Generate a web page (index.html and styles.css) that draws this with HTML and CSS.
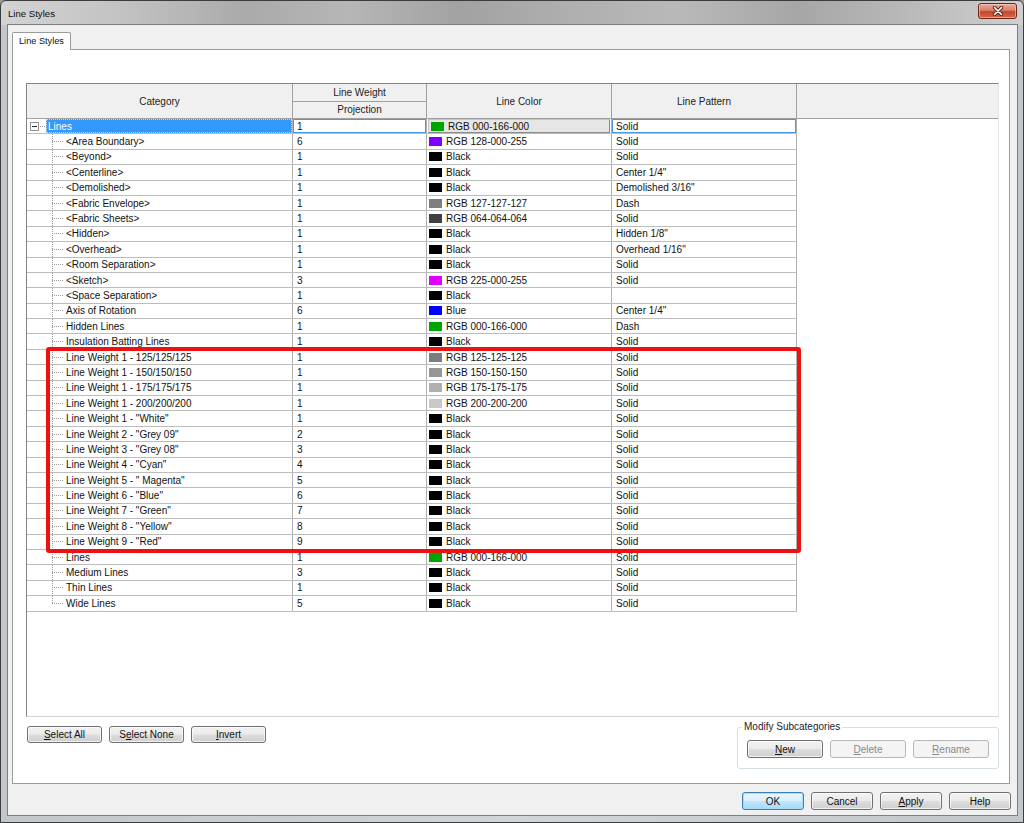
FILE: index.html
```html
<!DOCTYPE html>
<html>
<head>
<meta charset="utf-8">
<title>Line Styles</title>
<link rel="stylesheet" href="styles.css">
</head>
<body>
<div class="window">
  <div class="titlebar">
    <span class="title">Line Styles</span>
    <div class="close">
      <svg width="14" height="10" viewBox="0 0 14 10"><path d="M3.5 1.5l7 7M10.5 1.5l-7 7" stroke="#5a1a10" stroke-width="3.4" stroke-linecap="round"/><path d="M3.5 1.5l7 7M10.5 1.5l-7 7" stroke="#ffffff" stroke-width="1.7" stroke-linecap="round"/></svg>
    </div>
  </div>
  <div class="client">
    <div class="tabs"><div class="tab">Line Styles</div></div>
    <div class="panel">
      <div class="grid">
        <div class="head">
          <div class="hc">Category</div>
          <div class="hc lw"><div class="lw1">Line Weight</div><div class="lw2">Projection</div></div>
          <div class="hc">Line Color</div>
          <div class="hc">Line Pattern</div>
          <div class="hc last"></div>
        </div>
        <div class="body">
          <div class="row root">
            <div class="c cat rootcat">
              <svg class="exp" width="9" height="9" viewBox="0 0 9 9"><rect x="0.5" y="0.5" width="8" height="8" fill="#fbfbfb" stroke="#919191"/><path d="M2 4.5h5" stroke="#2b2b2b"/></svg>
              <span class="sel">Lines</span>
            </div>
            <div class="c w focus">1</div>
            <div class="c col"><div class="colorbox"><i class="sw green"></i>RGB 000-166-000</div></div>
            <div class="c pat focus">Solid</div>
          </div>
          <div class="row"><div class="c cat">&lt;Area Boundary&gt;</div><div class="c w">6</div><div class="c col"><i class="sw purple"></i>RGB 128-000-255</div><div class="c pat">Solid</div></div>
          <div class="row"><div class="c cat">&lt;Beyond&gt;</div><div class="c w">1</div><div class="c col"><i class="sw black"></i>Black</div><div class="c pat">Solid</div></div>
          <div class="row"><div class="c cat">&lt;Centerline&gt;</div><div class="c w">1</div><div class="c col"><i class="sw black"></i>Black</div><div class="c pat">Center 1/4"</div></div>
          <div class="row"><div class="c cat">&lt;Demolished&gt;</div><div class="c w">1</div><div class="c col"><i class="sw black"></i>Black</div><div class="c pat">Demolished 3/16"</div></div>
          <div class="row"><div class="c cat">&lt;Fabric Envelope&gt;</div><div class="c w">1</div><div class="c col"><i class="sw g127"></i>RGB 127-127-127</div><div class="c pat">Dash</div></div>
          <div class="row"><div class="c cat">&lt;Fabric Sheets&gt;</div><div class="c w">1</div><div class="c col"><i class="sw g064"></i>RGB 064-064-064</div><div class="c pat">Solid</div></div>
          <div class="row"><div class="c cat">&lt;Hidden&gt;</div><div class="c w">1</div><div class="c col"><i class="sw black"></i>Black</div><div class="c pat">Hidden 1/8"</div></div>
          <div class="row"><div class="c cat">&lt;Overhead&gt;</div><div class="c w">1</div><div class="c col"><i class="sw black"></i>Black</div><div class="c pat">Overhead 1/16"</div></div>
          <div class="row"><div class="c cat">&lt;Room Separation&gt;</div><div class="c w">1</div><div class="c col"><i class="sw black"></i>Black</div><div class="c pat">Solid</div></div>
          <div class="row"><div class="c cat">&lt;Sketch&gt;</div><div class="c w">3</div><div class="c col"><i class="sw magenta"></i>RGB 225-000-255</div><div class="c pat">Solid</div></div>
          <div class="row"><div class="c cat">&lt;Space Separation&gt;</div><div class="c w">1</div><div class="c col"><i class="sw black"></i>Black</div><div class="c pat"></div></div>
          <div class="row"><div class="c cat">Axis of Rotation</div><div class="c w">6</div><div class="c col"><i class="sw blue"></i>Blue</div><div class="c pat">Center 1/4"</div></div>
          <div class="row"><div class="c cat">Hidden Lines</div><div class="c w">1</div><div class="c col"><i class="sw green"></i>RGB 000-166-000</div><div class="c pat">Dash</div></div>
          <div class="row"><div class="c cat">Insulation Batting Lines</div><div class="c w">1</div><div class="c col"><i class="sw black"></i>Black</div><div class="c pat">Solid</div></div>
          <div class="row"><div class="c cat">Line Weight 1 - 125/125/125</div><div class="c w">1</div><div class="c col"><i class="sw g125"></i>RGB 125-125-125</div><div class="c pat">Solid</div></div>
          <div class="row"><div class="c cat">Line Weight 1 - 150/150/150</div><div class="c w">1</div><div class="c col"><i class="sw g150"></i>RGB 150-150-150</div><div class="c pat">Solid</div></div>
          <div class="row"><div class="c cat">Line Weight 1 - 175/175/175</div><div class="c w">1</div><div class="c col"><i class="sw g175"></i>RGB 175-175-175</div><div class="c pat">Solid</div></div>
          <div class="row"><div class="c cat">Line Weight 1 - 200/200/200</div><div class="c w">1</div><div class="c col"><i class="sw g200"></i>RGB 200-200-200</div><div class="c pat">Solid</div></div>
          <div class="row"><div class="c cat">Line Weight 1 - "White"</div><div class="c w">1</div><div class="c col"><i class="sw black"></i>Black</div><div class="c pat">Solid</div></div>
          <div class="row"><div class="c cat">Line Weight 2 - "Grey 09"</div><div class="c w">2</div><div class="c col"><i class="sw black"></i>Black</div><div class="c pat">Solid</div></div>
          <div class="row"><div class="c cat">Line Weight 3 - "Grey 08"</div><div class="c w">3</div><div class="c col"><i class="sw black"></i>Black</div><div class="c pat">Solid</div></div>
          <div class="row"><div class="c cat">Line Weight 4 - "Cyan"</div><div class="c w">4</div><div class="c col"><i class="sw black"></i>Black</div><div class="c pat">Solid</div></div>
          <div class="row"><div class="c cat">Line Weight 5 - " Magenta"</div><div class="c w">5</div><div class="c col"><i class="sw black"></i>Black</div><div class="c pat">Solid</div></div>
          <div class="row"><div class="c cat">Line Weight 6 - "Blue"</div><div class="c w">6</div><div class="c col"><i class="sw black"></i>Black</div><div class="c pat">Solid</div></div>
          <div class="row"><div class="c cat">Line Weight 7 - "Green"</div><div class="c w">7</div><div class="c col"><i class="sw black"></i>Black</div><div class="c pat">Solid</div></div>
          <div class="row"><div class="c cat">Line Weight 8 - "Yellow"</div><div class="c w">8</div><div class="c col"><i class="sw black"></i>Black</div><div class="c pat">Solid</div></div>
          <div class="row"><div class="c cat">Line Weight 9 - "Red"</div><div class="c w">9</div><div class="c col"><i class="sw black"></i>Black</div><div class="c pat">Solid</div></div>
          <div class="row"><div class="c cat">Lines</div><div class="c w">1</div><div class="c col"><i class="sw green"></i>RGB 000-166-000</div><div class="c pat">Solid</div></div>
          <div class="row"><div class="c cat">Medium Lines</div><div class="c w">3</div><div class="c col"><i class="sw black"></i>Black</div><div class="c pat">Solid</div></div>
          <div class="row"><div class="c cat">Thin Lines</div><div class="c w">1</div><div class="c col"><i class="sw black"></i>Black</div><div class="c pat">Solid</div></div>
          <div class="row"><div class="c cat lastchild">Wide Lines</div><div class="c w">5</div><div class="c col"><i class="sw black"></i>Black</div><div class="c pat">Solid</div></div>
        </div>
        <div class="redbox"></div>
      </div>
      <div class="actions">
        <div class="leftbtns">
          <div class="btn sm"><u>S</u>elect All</div>
          <div class="btn sm">S<u>e</u>lect None</div>
          <div class="btn sm"><u>I</u>nvert</div>
        </div>
        <fieldset class="group">
          <legend>Modify Subcategories</legend>
          <div class="groupbtns">
            <div class="btn md"><u>N</u>ew</div>
            <div class="btn md disabled"><u>D</u>elete</div>
            <div class="btn md disabled"><u>R</u>ename</div>
          </div>
        </fieldset>
      </div>
    </div>
    <div class="footer">
      <div class="btn ft default">OK</div>
      <div class="btn ft">Cancel</div>
      <div class="btn ft"><u>A</u>pply</div>
      <div class="btn ft">Help</div>
    </div>
  </div>
</div>
</body>
</html>
```

FILE: styles.css
```css
html, body {
  margin: 0;
  padding: 0;
}
body {
  font-family: "Liberation Sans", Arial, sans-serif;
  font-size: 10px;
  color: #000;
  background: #9a9a9a;
}
.window {
  width: 1024px;
  height: 823px;
  box-sizing: border-box;
  border: 1px solid #3c3c3c;
  border-radius: 6px 6px 0 0;
  padding: 0 6px 7px 7px;
  display: flex;
  flex-direction: column;
  background:
    linear-gradient(90deg, #d3d3d3 0%, #c2c2c2 12%, #aaaaaa 24%, #b6b6b6 34%, #a2a2a2 45%, #aeaeae 55%, #b9b9b9 66%, #a6a6a6 78%, #b8b8b8 88%, #cfcfcf 100%) 0 0 / 100% 24px no-repeat,
    linear-gradient(90deg, #c3c6ca 0%, #d2d5d8 50%, #c3c6ca 100%);
}
.titlebar {
  height: 24px;
  display: flex;
  justify-content: space-between;
  align-items: flex-start;
  flex: none;
}
.title {
  margin-top: 7px;
  font-size: 9.6px;
  color: #101010;
}
.close {
  margin-top: 2px;
  width: 39px;
  height: 16px;
  box-sizing: border-box;
  border: 1px solid #6e2418;
  border-radius: 3px;
  background: linear-gradient(#eaa898 0%, #d98068 45%, #c6452a 55%, #d36a50 100%);
  box-shadow: inset 0 0 0 1px rgba(255, 220, 210, 0.5);
  display: flex;
  align-items: center;
  justify-content: center;
}
.client {
  flex: 1;
  background: #f0f0f0;
  box-shadow: 0 0 0 1px #7b7e82;
  display: flex;
  flex-direction: column;
}
.tabs {
  padding: 7px 0 0 4px;
  display: flex;
  flex: none;
}
.tab {
  height: 18px;
  box-sizing: border-box;
  margin-bottom: -1px;
  padding: 3px 6px 0 6px;
  border: 1px solid #9a9a9a;
  border-bottom: none;
  border-radius: 2px 2px 0 0;
  background: #ffffff;
  font-size: 9.2px;
  color: #111;
  position: relative;
  z-index: 1;
}
.panel {
  flex: none;
  height: 735px;
  box-sizing: border-box;
  margin: 0 7px 0 4px;
  border: 1px solid #9a9a9a;
  background: #ffffff;
  padding: 33px 0 0 13px;
}
.grid {
  width: 973px;
  height: 634px;
  box-sizing: border-box;
  border: 1px solid;
  border-color: #858585 #e6e6e6 #d4d4d4 #858585;
  position: relative;
  background: #fff;
}
.head {
  height: 35px;
  box-sizing: border-box;
  border-bottom: 1px solid #a0a0a0;
  display: grid;
  grid-template-columns: 266px 134px 185px 185px 1fr;
  background: #f0f0f0;
  color: #222;
}
.hc {
  border-right: 1px solid #a0a0a0;
  display: flex;
  align-items: center;
  justify-content: center;
}
.hc.last {
  border-right: none;
}
.hc.lw {
  flex-direction: column;
  align-items: stretch;
}
.lw1, .lw2 {
  flex: 1;
  display: flex;
  align-items: center;
  justify-content: center;
}
.lw1 {
  border-bottom: 1px solid #a0a0a0;
}
.row {
  width: 770px;
  height: 15.4px;
  box-sizing: border-box;
  border-bottom: 1px solid #bcbcbc;
  display: grid;
  grid-template-columns: 266px 134px 185px 185px;
}
.c {
  box-sizing: border-box;
  border-right: 1px solid #b0b0b0;
  display: flex;
  align-items: center;
  white-space: nowrap;
  overflow: hidden;
  color: #111;
}
.cat {
  padding-left: 39px;
  background-image:
    repeating-linear-gradient(to bottom, #9a9a9a 0 1px, transparent 1px 2px),
    repeating-linear-gradient(to right, #9a9a9a 0 1px, transparent 1px 2px);
  background-size: 1px 100%, 11px 1px;
  background-position: 25px 0, 25px 50%;
  background-repeat: no-repeat;
}
.cat.lastchild {
  background-size: 1px 50%, 11px 1px;
}
.rootcat {
  padding-left: 3px;
  background-image: repeating-linear-gradient(to right, #9a9a9a 0 1px, transparent 1px 2px);
  background-size: 6px 1px;
  background-position: 13px 50%;
  align-items: stretch;
}
.exp {
  align-self: center;
  flex: none;
}
.sel {
  flex: 1;
  margin-left: 7px;
  background: #3399ff;
  color: #fff;
  padding-left: 2px;
  display: flex;
  align-items: center;
  outline: 1px dotted #b9dcff;
  outline-offset: -1px;
}
.w {
  padding-left: 4px;
}
.pat {
  padding-left: 4px;
}
.focus {
  box-shadow: inset 0 0 0 1px #4a98ea;
}
.col {
  padding-left: 2px;
}
.colorbox {
  flex: 1;
  align-self: stretch;
  margin: 0 1px 0 -1px;
  padding-left: 2px;
  display: flex;
  align-items: center;
  background: #e6e6e6;
  border: 1px solid;
  border-color: #c6c6c6 #8c8c8c #8c8c8c #c6c6c6;
}
.sw {
  display: inline-block;
  width: 13px;
  height: 9px;
  margin-right: 4px;
  flex: none;
}
.sw.black { background: #000; }
.sw.green { background: #00a600; }
.sw.purple { background: #8000ff; }
.sw.magenta { background: #e100ff; }
.sw.blue { background: #0000ff; }
.sw.g127 { background: #7f7f7f; }
.sw.g064 { background: #404040; }
.sw.g125 { background: #7d7d7d; }
.sw.g150 { background: #969696; }
.sw.g175 { background: #afafaf; }
.sw.g200 { background: #c8c8c8; }
.redbox {
  position: absolute;
  left: 19px;
  top: 263px;
  width: 755px;
  height: 206px;
  box-sizing: border-box;
  border: 4px solid #ee1111;
  border-radius: 3px;
}
.actions {
  width: 973px;
  margin-top: 4px;
  display: flex;
  align-items: flex-start;
}
.leftbtns {
  margin-top: 5px;
  margin-left: 1px;
  display: flex;
  gap: 7px;
}
.btn {
  height: 18px;
  box-sizing: border-box;
  border: 1px solid #707070;
  border-radius: 3px;
  background: linear-gradient(#f2f2f2 0%, #ebebeb 48%, #dddddd 52%, #cfcfcf 100%);
  box-shadow: inset 0 0 0 1px rgba(255, 255, 255, 0.7);
  display: flex;
  align-items: center;
  justify-content: center;
  color: #111;
  font-size: 10px;
}
.btn u {
  text-decoration: underline;
  text-underline-offset: 1px;
}
.btn.sm {
  width: 75px;
  height: 17px;
}
.btn.md {
  width: 76px;
}
.btn.ft {
  width: 62px;
}
.btn.default {
  border-color: #3c7fb1;
  background: linear-gradient(#eaf6fd 0%, #d9f0fc 48%, #bee6fd 52%, #a7d9f5 100%);
  box-shadow: inset 0 0 0 1px #a8dcf8;
}
.btn.disabled {
  border-color: #b5b9bc;
  background: #f4f4f4;
  box-shadow: none;
  color: #8a8a8a;
}
.group {
  margin: 0 0 0 auto;
  width: 262px;
  box-sizing: border-box;
  padding: 7px 0 10px 9px;
  border: 1px solid #d5dfe5;
  border-radius: 3px;
  min-width: 0;
}
.group legend {
  padding: 0 2px;
  margin-left: -5px;
  font-size: 10px;
  line-height: 12px;
  color: #1c1c2c;
}
.groupbtns {
  display: flex;
  gap: 7px;
}
.footer {
  flex: 1;
  display: flex;
  justify-content: flex-end;
  align-items: flex-start;
  gap: 7px;
  padding: 8px 6px 0 0;
}
```
